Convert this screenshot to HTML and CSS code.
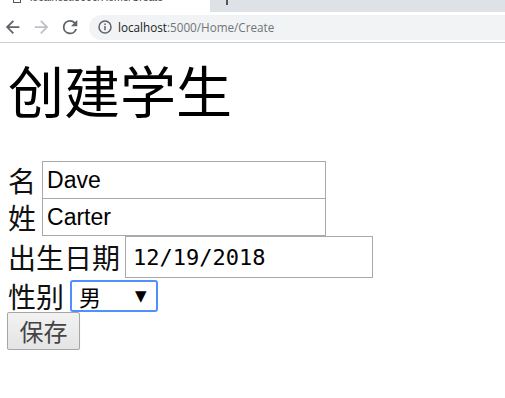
FILE: index.html
```html
<!DOCTYPE html>
<html lang="zh">
<head>
<meta charset="utf-8">
<title>Create</title>
<link rel="stylesheet" href="styles.css">
</head>
<body>
<header class="chrome">
  <div class="tabstrip">
    <div class="tab">
      <span class="favicon"></span>
      <span class="tab-title">localhost:5000/Home/Create</span>
      <span class="tab-close">×</span>
    </div>
    <div class="tab-rest"><span class="newtab"></span></div>
  </div>
  <div class="toolbar">
    <svg class="nav back" width="16" height="16" viewBox="0 0 16 16"><path d="M15 7H3.8l5.2-5.2L7.6.4 0 8l7.6 7.6 1.4-1.4L3.8 9H15z" fill="#5f6368" transform="scale(0.9) translate(1 1)"/></svg>
    <svg class="nav fwd" width="16" height="16" viewBox="0 0 16 16"><path d="M1 7h11.2L7 1.8 8.4.4 16 8l-7.6 7.6L7 14.2 12.2 9H1z" fill="#bdc1c6" transform="scale(0.9) translate(1 1)"/></svg>
    <svg class="nav reload" width="16" height="16" viewBox="0 0 16 16"><path d="M13.6 2.4A7.9 7.9 0 0 0 8 0a8 8 0 1 0 7.7 10h-2.1A6 6 0 1 1 8 2a5.9 5.9 0 0 1 4.2 1.8L9 7h7V0z" fill="#5f6368" transform="scale(0.9) translate(1 1)"/></svg>
    <div class="omnibox">
      <svg class="info" width="14" height="14" viewBox="0 0 14 14"><circle cx="7" cy="7" r="6" fill="none" stroke="#5f6368" stroke-width="1.5"/><rect x="6.25" y="6" width="1.5" height="4.2" fill="#5f6368"/><rect x="6.25" y="3.5" width="1.5" height="1.5" fill="#5f6368"/></svg>
      <span class="url"><span class="host">localhost</span>:5000/Home/Create</span>
    </div>
  </div>
</header>
<main class="page">
  <h1 class="title">创建学生</h1>
  <form class="form">
    <div class="row r1"><label class="lbl">名</label><input class="field" type="text" value="Dave"></div>
    <div class="row r2"><label class="lbl">姓</label><input class="field" type="text" value="Carter"></div>
    <div class="row r3"><label class="lbl">出生日期</label><input class="field date" type="text" value="12/19/2018"></div>
    <div class="row r4"><label class="lbl">性别</label><div class="select"><select class="sel"><option>男</option><option>女</option></select><span class="arrow">▼</span></div></div>
    <div class="row r5"><button class="btn" type="button">保存</button></div>
  </form>
</main>
</body>
</html>
```
FILE: styles.css
```css
* { box-sizing: border-box; }
html, body { margin: 0; padding: 0; background: #fff; }
body { font-family: "Noto Sans CJK SC", sans-serif; color: #000; }

.chrome { display: flex; flex-direction: column; }
.tabstrip { display: flex; height: 12px; background: #dee1e6; overflow: hidden; }
.tab { width: 210px; background: #fff; display: flex; align-items: flex-start; font-family: "Liberation Sans", sans-serif; font-size: 10.5px; color: #333; }
.favicon { width: 8px; height: 12px; border: 1.5px solid #555; margin: -9px 0 0 13px; flex: none; }
.tab-title { margin: -9px 0 0 9px; line-height: 12px; color: #3c4043; white-space: nowrap; }
.tab-close { margin: -10px 0 0 29px; line-height: 12px; font-size: 13px; color: #555; }
.tab-rest { flex: 1; background: #dee1e6; border-bottom-left-radius: 8px; display: flex; }
.newtab { width: 1.5px; height: 5px; background: #555; margin-left: 16px; }

.toolbar { height: 31px; display: flex; align-items: center; border-bottom: 1px solid #cfcfcf; background: #fff; }
.nav { flex: none; }
.back { margin-left: 5px; }
.fwd { margin-left: 12px; }
.reload { margin-left: 13px; }
.omnibox { flex: 1; height: 25px; margin-left: 11px; background: #f1f3f4; border-radius: 13px 0 0 13px; display: flex; align-items: center; padding-left: 9px; }
.info { flex: none; }
.url { margin-left: 6px; font-family: "Open Sans", "Liberation Sans", sans-serif; font-size: 11.7px; color: #70757a; }
.host { color: #202124; }

.page { padding: 0 8px; }
.title { margin: 18px 0 0 0; font-size: 56px; line-height: 56px; font-weight: 400; height: 56px; }
.form { margin-top: 44px; display: flex; flex-direction: column; }
.row { display: flex; align-items: center; }
.lbl { font-size: 28px; line-height: 28px; margin-right: 6px; color: #111; }
.field { height: 38px; width: 284px; border: 1px solid #a9a9a9; padding: 0 4px; font-family: "Liberation Sans", Arial, sans-serif; font-size: 23px; color: #000; background: #fff; outline: none; }
.r2 { margin-top: -1px; }
.date { width: 248px; height: 42px; margin-left: -1px; padding-left: 7px; font-family: "DejaVu Sans Mono", "Liberation Mono", monospace; font-size: 22px; }
.r4 { margin-top: 2px; height: 32px; }
.select { display: flex; align-items: center; width: 88px; height: 32px; border: 2px solid #4d90fe; border-radius: 3px; background: #fff; }
.sel { appearance: none; -webkit-appearance: none; border: none; background: transparent; outline: none; font-family: "Noto Sans CJK SC", sans-serif; font-size: 22px; padding: 0 0 0 7px; width: 63px; color: #000; }
.arrow { font-family: "DejaVu Sans", sans-serif; font-size: 15px; color: #000; }
.btn { margin-left: -1px; width: 73px; height: 38px; border: 1px solid #a6a6a6; border-radius: 2px; background: linear-gradient(#f2f2f2, #e4e4e4); font-family: "Noto Sans CJK SC", sans-serif; font-size: 24px; line-height: 34px; padding: 0; color: #444; box-shadow: 0 1px 1px rgba(0,0,0,0.15); }
```
